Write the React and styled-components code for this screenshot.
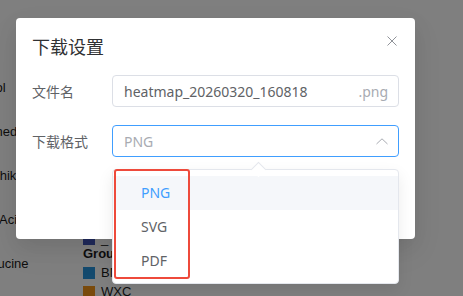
import React from "react";
import styled, { createGlobalStyle } from "styled-components";

const GlobalStyle = createGlobalStyle`
  html, body { margin: 0; padding: 0; background: #fff; }
  body { width: 463px; height: 296px; overflow: hidden; }
`;

const Page = styled.div`
  position: relative;
  width: 463px;
  height: 296px;
  overflow: hidden;
  font-family: "Liberation Sans", Arial, sans-serif;
  color: #1c1c1c;
`;

const RowLabels = styled.div`
  display: flex;
  flex-direction: column;
  gap: 28px;
  padding-top: 80px;
  font-size: 13px;
  line-height: 16px;
`;

const RowLabel = styled.div`
  white-space: nowrap;
  margin-left: ${p => p.shift}px;
`;

const Legend = styled.div`
  position: absolute;
  left: 83px;
  top: 233px;
  display: flex;
  flex-direction: column;
  font-size: 13px;
`;

const LegendItem = styled.div`
  display: flex;
  align-items: center;
  gap: 6px;
  height: 12px;
  margin-bottom: ${p => p.gap || 7}px;
  line-height: 12px;
`;

const Swatch = styled.span`
  width: 12px;
  height: 12px;
  background: ${p => p.color};
`;

const LegendTitle = styled.div`
  font-weight: bold;
  line-height: 14px;
  margin-bottom: 6px;
`;

const Overlay = styled.div`
  position: absolute;
  inset: 0;
  background: rgba(0, 0, 0, 0.5);
`;

const Dialog = styled.div`
  position: absolute;
  left: 16px;
  top: 18px;
  width: 399px;
  height: 221px;
  box-sizing: border-box;
  background: #fff;
  border-radius: 4px;
  box-shadow: 0 12px 32px 4px rgba(0, 0, 0, 0.04), 0 8px 20px rgba(0, 0, 0, 0.08);
  padding: 16px;
  font-family: "Noto Sans", "Noto Sans CJK SC", sans-serif;
`;

const Header = styled.div`
  display: flex;
  justify-content: space-between;
  align-items: center;
  height: 24px;
  padding-bottom: 17px;
`;

const Title = styled.div`
  font-family: "Noto Sans CJK SC", sans-serif;
  font-size: 18px;
  line-height: 24px;
  color: #303133;
`;

const Close = styled.span`
  display: flex;
  margin-right: 2px;
  margin-top: -10px;
`;

const FormRow = styled.div`
  display: flex;
  align-items: center;
  height: 32px;
  margin-bottom: 18px;
`;

const Label = styled.div`
  width: 80px;
  font-family: "Noto Sans CJK SC", sans-serif;
  font-size: 14px;
  color: #606266;
`;

const Field = styled.div`
  flex: 1;
  height: 32px;
  box-sizing: border-box;
  display: flex;
  align-items: center;
  justify-content: space-between;
  padding: 0 10px 0 11px;
  border: 1px solid ${p => (p.focused ? "#409eff" : "#dcdfe6")};
  border-radius: 4px;
  font-size: 14px;
  color: ${p => (p.placeholder ? "#a8abb2" : "#606266")};
`;

const Suffix = styled.span`
  color: #a8abb2;
`;

const Dropdown = styled.div`
  position: absolute;
  left: 112px;
  top: 169px;
  width: 287px;
  height: 115px;
  box-sizing: border-box;
  background: #fff;
  border: 1px solid #e4e7ed;
  border-radius: 4px;
  box-shadow: 0 6px 16px rgba(0, 0, 0, 0.08);
  padding: 6px 0;
  font-family: "Noto Sans", "Noto Sans CJK SC", sans-serif;
`;

const Arrow = styled.span`
  position: absolute;
  left: 140px;
  top: -6px;
  width: 10px;
  height: 10px;
  background: #fff;
  border-left: 1px solid #e4e7ed;
  border-top: 1px solid #e4e7ed;
  transform: rotate(45deg);
`;

const Option = styled.div`
  height: 34px;
  line-height: 34px;
  padding-left: 28px;
  font-size: 14px;
  color: ${p => (p.selected ? "#409eff" : "#606266")};
  background: ${p => (p.hover ? "#f5f7fa" : "transparent")};
`;

const Marker = styled.div`
  position: absolute;
  left: 114px;
  top: 169px;
  width: 76px;
  height: 110px;
  box-sizing: border-box;
  border: 2px solid #ee4a3b;
  border-radius: 3px;
`;

const labels = [
  { text: "Glycerol", shift: -42 },
  { text: "Combined", shift: -42 },
  { text: "Shikimic acid", shift: -9 },
  { text: "Acid", shift: -1 },
  { text: "Isoleucine", shift: -30 },
];

export default function App() {
  return (
    <Page>
      <GlobalStyle />
      <RowLabels>
        {labels.map(l => (
          <RowLabel key={l.text} shift={l.shift}>{l.text}</RowLabel>
        ))}
      </RowLabels>
      <Legend>
        <LegendItem gap={2}>
          <Swatch color="#3f54b6" />
          <span>_</span>
        </LegendItem>
        <LegendTitle>Group</LegendTitle>
        <LegendItem>
          <Swatch color="#2994dc" />
          <span>BN</span>
        </LegendItem>
        <LegendItem>
          <Swatch color="#f29419" />
          <span>WXC</span>
        </LegendItem>
      </Legend>
      <Overlay />
      <Dialog>
        <Header>
          <Title>下载设置</Title>
          <Close>
            <svg width="10" height="10" viewBox="0 0 10 10">
              <path d="M0.5 0.5 L9.5 9.5 M9.5 0.5 L0.5 9.5" stroke="#909399" strokeWidth="1" fill="none" />
            </svg>
          </Close>
        </Header>
        <FormRow>
          <Label>文件名</Label>
          <Field>
            <span>heatmap_20260320_160818</span>
            <Suffix>.png</Suffix>
          </Field>
        </FormRow>
        <FormRow>
          <Label>下载格式</Label>
          <Field focused placeholder="true">
            <span>PNG</span>
            <svg width="12" height="7" viewBox="0 0 12 7">
              <path d="M0.5 6 L6 0.8 L11.5 6" stroke="#a8abb2" strokeWidth="1" fill="none" />
            </svg>
          </Field>
        </FormRow>
      </Dialog>
      <Dropdown>
        <Arrow />
        <Option selected hover>PNG</Option>
        <Option>SVG</Option>
        <Option>PDF</Option>
      </Dropdown>
      <Marker />
    </Page>
  );
}
